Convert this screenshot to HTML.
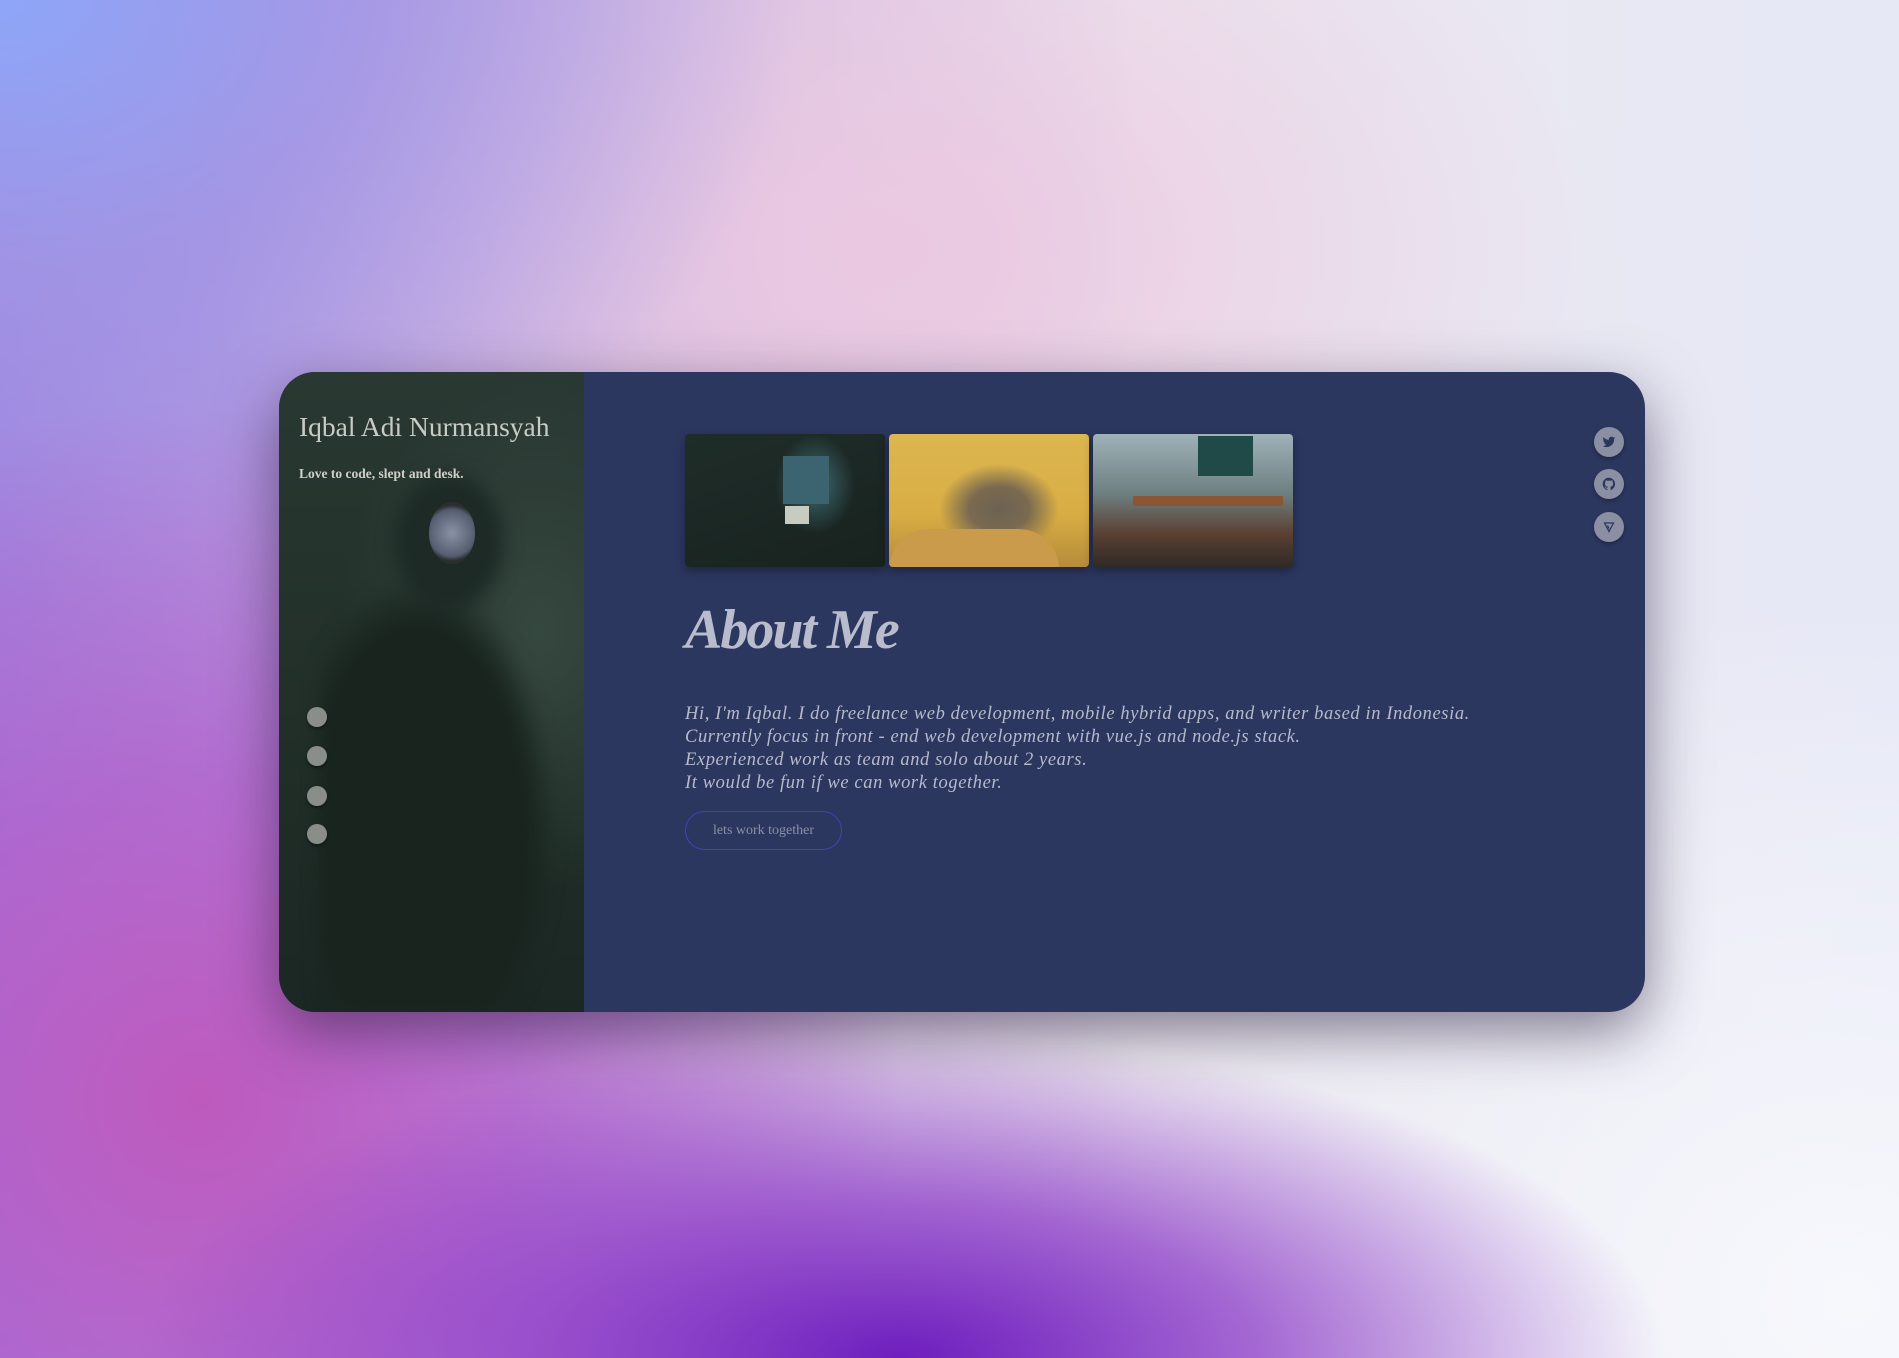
<!DOCTYPE html>
<html><head><meta charset="utf-8"><style>
*{margin:0;padding:0;box-sizing:border-box}
html,body{width:1899px;height:1358px;overflow:hidden}
body{position:relative;font-family:"Liberation Serif",serif;
background:
radial-gradient(ellipse 900px 380px at 900px 1358px,rgba(110,30,190,1) 0%,rgba(140,60,200,.75) 40%,rgba(200,150,230,0) 85%),
radial-gradient(ellipse 700px 700px at 200px 1100px,rgba(190,90,190,1) 0%,rgba(180,90,200,.7) 45%,rgba(180,90,200,0) 100%),
radial-gradient(ellipse 800px 600px at 0px 0px,#8ea6f8 0%,rgba(160,150,230,.8) 45%,rgba(200,180,230,0) 100%),
radial-gradient(ellipse 700px 500px at 900px 250px,rgba(235,200,225,1) 0%,rgba(235,210,230,0) 100%),
radial-gradient(ellipse 800px 700px at 1850px 1300px,#f7f8fc 0%,rgba(240,242,250,0) 100%),
linear-gradient(90deg,#a084de 0%,#d6c2e4 40%,#ece8ef 60%,#e6e8f6 100%);}
.card{position:absolute;left:279px;top:372px;width:1366px;height:640px;border-radius:36px;overflow:hidden;background:#2c3760;box-shadow:0 20px 60px rgba(40,30,60,.55)}
.left{position:absolute;left:0;top:0;width:305px;height:640px;background:
radial-gradient(ellipse 200px 260px at 260px 260px,#354840 0%,rgba(53,72,64,0) 100%),
linear-gradient(180deg,#2a3833 0%,#223029 50%,#1b2723 100%)}
.head{position:absolute;left:40px;top:80px;width:260px;height:560px;filter:blur(8px);background:radial-gradient(ellipse 80px 100px at 130px 90px,#1d2a26 60%,transparent 75%),radial-gradient(ellipse 170px 320px at 100px 380px,#19241f 65%,transparent 80%)}
.ear{position:absolute;left:150px;top:130px;width:46px;height:62px;border-radius:50%;background:radial-gradient(circle,#8a93a6 0%,#555d70 60%,#2a3030 72%);}
.name{position:absolute;left:20px;top:39px;color:#c9cbc5;font-size:27.5px;white-space:nowrap}
.tag{position:absolute;left:20px;top:94px;color:#d0d0c8;font-size:13.5px;font-weight:bold}
.dot{position:absolute;left:28px;width:20px;height:20px;border-radius:50%;background:#8a8e88;box-shadow:0 2px 3px rgba(0,0,0,.4)}
.img{position:absolute;top:62px;width:200px;height:133px;border-radius:4px;box-shadow:0 4px 10px rgba(0,0,0,.35);overflow:hidden}
h1{position:absolute;left:406px;top:226px;font-family:"Liberation Serif",serif;font-style:italic;font-weight:bold;font-size:56px;color:#b9bccc;letter-spacing:-2px}
.p{position:absolute;left:406px;top:331px;color:#b6bacb;font-style:italic;font-size:18.5px;line-height:23px;white-space:nowrap;letter-spacing:.6px}
.btn{position:absolute;left:406px;top:439px;width:157px;height:39px;border:1px solid #4940b5;border-radius:20px;color:#8c90a6;font-size:14px;text-align:center;line-height:37px}
.soc{position:absolute;left:1315px;width:30px;height:30px;border-radius:50%;background:#8b8fa3;box-shadow:0 2px 4px rgba(0,0,0,.3);display:flex;align-items:center;justify-content:center}
</style></head><body>
<div class="card">
 <div class="left"><div class="head"></div><div class="ear"></div>
  <div class="name">Iqbal Adi Nurmansyah</div>
  <div class="tag">Love to code, slept and desk.</div>
  <div class="dot" style="top:335px"></div><div class="dot" style="top:374px"></div>
  <div class="dot" style="top:414px"></div><div class="dot" style="top:452px"></div>
 </div>
 <div class="img" style="left:406px;background:radial-gradient(ellipse 40px 50px at 130px 50px,#3d6a70 0%,rgba(61,106,112,0) 100%),linear-gradient(160deg,#1f2d29,#18221f)"><div style="position:absolute;left:98px;top:22px;width:46px;height:48px;background:#3b6470"></div><div style="position:absolute;left:100px;top:72px;width:24px;height:18px;background:#c8ccc0"></div></div>
 <div class="img" style="left:610px;background:radial-gradient(ellipse 60px 45px at 110px 75px,#6c6152 0%,#7a6a50 50%,rgba(0,0,0,0) 100%),linear-gradient(180deg,#dcb650 0%,#d9ad44 60%,#b58c3a 100%)"><div style="position:absolute;left:0;top:95px;width:170px;height:40px;border-radius:40px 40px 0 0;background:#c99b4a"></div></div>
 <div class="img" style="left:814px;background:linear-gradient(180deg,#9fb2b8 0%,#6e7f80 45%,#5a4032 75%,#2f2a26 100%)"><div style="position:absolute;left:105px;top:2px;width:55px;height:40px;background:#1f4a48"></div><div style="position:absolute;left:40px;top:62px;width:150px;height:10px;background:#8a5634"></div></div>
 <h1>About Me</h1>
 <div class="p">Hi, I'm Iqbal. I do freelance web development, mobile hybrid apps, and writer based in Indonesia.<br>Currently focus in front - end web development with vue.js and node.js stack.<br>Experienced work as team and solo about 2 years.<br>It would be fun if we can work together.</div>
 <div class="btn">lets work together</div>
 <div class="soc" style="top:55px"><svg width="14" height="14" viewBox="0 0 24 24"><path fill="#2c3760" d="M23 5c-.8.4-1.7.6-2.6.7.9-.6 1.6-1.4 2-2.5-.9.5-1.9.9-2.9 1.1A4.5 4.5 0 0 0 11.8 8.4 12.8 12.8 0 0 1 2.5 3.7a4.5 4.5 0 0 0 1.4 6c-.7 0-1.4-.2-2-.6 0 2.2 1.6 4 3.6 4.4-.7.2-1.4.2-2 .1.6 1.8 2.2 3.1 4.2 3.1A9 9 0 0 1 1 18.6 12.8 12.8 0 0 0 20.7 7.2V6.6C21.6 6 22.4 5.2 23 5z"/></svg></div>
 <div class="soc" style="top:97px"><svg width="14" height="14" viewBox="0 0 24 24"><path fill="#2c3760" d="M12 1a11 11 0 0 0-3.5 21.4c.6.1.8-.2.8-.5v-2c-3.1.7-3.7-1.4-3.7-1.4-.5-1.3-1.2-1.6-1.2-1.6-1-.7.1-.7.1-.7 1.1.1 1.7 1.1 1.7 1.1 1 1.7 2.6 1.2 3.2.9.1-.7.4-1.2.7-1.5-2.4-.3-5-1.2-5-5.4 0-1.2.4-2.2 1.1-2.9-.1-.3-.5-1.4.1-2.9 0 0 .9-.3 3 1.1a10.5 10.5 0 0 1 5.5 0c2.1-1.4 3-1.1 3-1.1.6 1.5.2 2.6.1 2.9.7.8 1.1 1.7 1.1 2.9 0 4.2-2.6 5.1-5 5.4.4.3.7 1 .7 2v3c0 .3.2.6.8.5A11 11 0 0 0 12 1z"/></svg></div>
 <div class="soc" style="top:140px"><svg width="12" height="12" viewBox="0 0 24 24"><path fill="none" stroke="#2c3760" stroke-width="2.5" d="M3 4h18L12 21z M9 9l3 6"/></svg></div>
</div>
</body></html>
